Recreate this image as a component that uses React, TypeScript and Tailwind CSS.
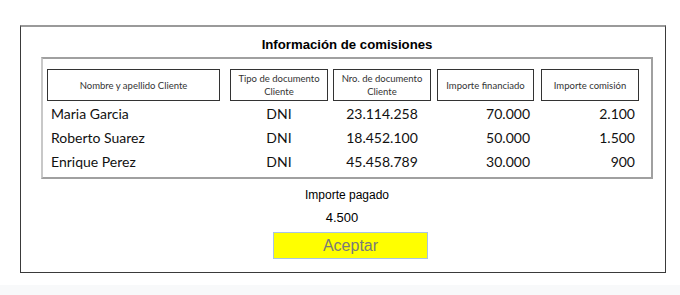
import React from "react";

const rows = [
  { name: "Maria Garcia", tipo: "DNI", nro: "23.114.258", fin: "70.000", com: "2.100" },
  { name: "Roberto Suarez", tipo: "DNI", nro: "18.452.100", fin: "50.000", com: "1.500" },
  { name: "Enrique Perez", tipo: "DNI", nro: "45.458.789", fin: "30.000", com: "900" },
];

const headers = [
  "Nombre y apellido Cliente",
  "Tipo de documento Cliente",
  "Nro. de documento Cliente",
  "Importe financiado",
  "Importe comisión",
];

export default function App() {
  return (
    <div className="w-[680px] h-[295px] bg-white flex flex-col">
      <div className="h-[285px] pt-[25px] pl-[20px]">
        <div className="w-[646px] h-[248px] border-l border-r border-b border-[#3a3a3a] border-t-2 border-t-[#9a9a9a] flex flex-col">
          <div className="ml-[20px] w-[612px] h-[30px] flex items-center justify-center pt-[6px] text-[13.2px] font-bold text-black [font-family:'Liberation_Sans',Arial,sans-serif]">
            Información de comisiones
          </div>
          <div className="ml-[20px] w-[612px] h-[122px] border-2 border-[#a0a0a0] border-l-[#c8c8c8] pt-[10px] pl-[4px] [font-family:Lato,'Open_Sans',sans-serif]">
            <div className="grid grid-cols-[183px_103px_104px_104px_98px]">
              {headers.map((h, i) => (
                <div
                  key={h}
                  className={`${i === 0 ? "w-[173px]" : i === 3 ? "w-[97px]" : "w-[98px]"} h-[32px] border-[1.5px] border-[#333] flex items-center justify-center text-center text-[9.5px] leading-[13px] text-[#333] px-1`}
                >
                  {h}
                </div>
              ))}
              {rows.map((r) => (
                <React.Fragment key={r.name}>
                  <div className="h-[24px] flex items-center pl-[4px] text-[14px] text-[#111]">{r.name}</div>
                  <div className="h-[24px] w-[98px] flex items-center justify-center text-[14px] text-[#111]">{r.tipo}</div>
                  <div className="h-[24px] w-[98px] flex items-center justify-center text-[14px] text-[#111]">{r.nro}</div>
                  <div className="h-[24px] w-[97px] flex items-center justify-end pr-[4px] text-[14px] text-[#111]">{r.fin}</div>
                  <div className="h-[24px] w-[98px] flex items-center justify-end pr-[4px] text-[14px] text-[#111]">{r.com}</div>
                </React.Fragment>
              ))}
            </div>
          </div>
          <div className="[font-family:'Liberation_Sans',Arial,sans-serif] flex flex-col">
            <div className="ml-[20px] w-[612px] h-[16px] mt-[8px] flex items-center justify-center text-[12px] text-black">
              Importe pagado
            </div>
            <div className="ml-[20px] w-[602px] h-[16px] mt-[7px] flex items-center justify-center text-[13px] text-black">
              4.500
            </div>
            <button className="ml-[252px] mt-[6px] w-[155px] h-[27px] bg-[#ffff00] border border-[#a8c4e4] text-[16px] text-[#7a7a7a] flex items-center justify-center">
              Aceptar
            </button>
          </div>
        </div>
      </div>
      <div className="h-[10px] bg-[#f8f9fa]" />
    </div>
  );
}
